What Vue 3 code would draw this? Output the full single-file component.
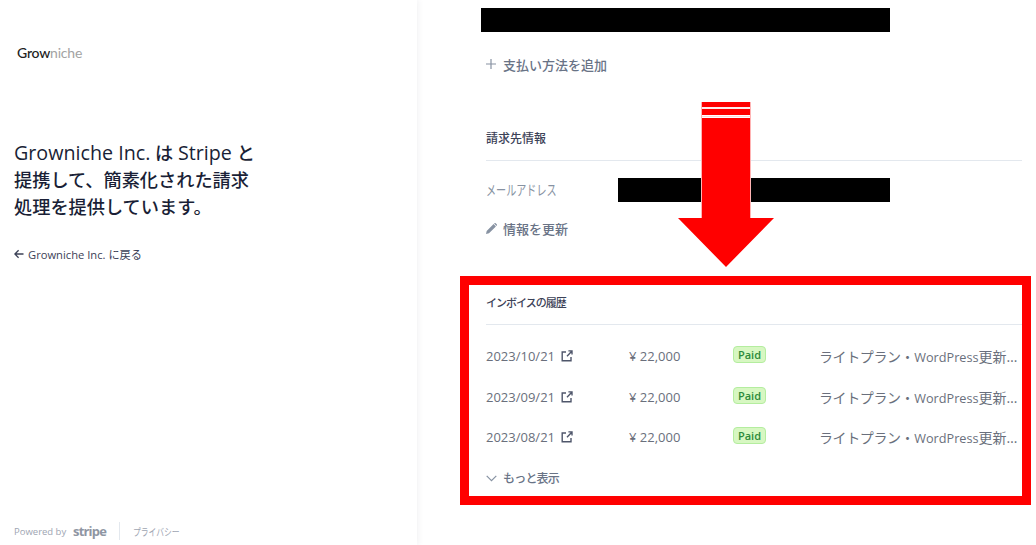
<script setup>
const invoices = [
  { id: 1, date: '2023/10/21', amount: '¥ 22,000', status: 'Paid' },
  { id: 2, date: '2023/09/21', amount: '¥ 22,000', status: 'Paid' },
  { id: 3, date: '2023/08/21', amount: '¥ 22,000', status: 'Paid' },
]
</script>

<template>
  <div class="page">
    <aside class="side">
      <div class="logo"><span class="logo-dark">Grow</span><span class="logo-light">niche</span></div>
      <h1 class="lead"><span class="latin">Growniche Inc.</span> は <span class="latin">Stripe</span> と<br>提携して、簡素化された請求<br>処理を提供しています。</h1>
      <a class="back">
        <svg width="10" height="10" viewBox="0 0 10 10"><path d="M9.500 5H1M4.600 1.200 .9 5l3.700 3.800" fill="none" stroke="#3c4257" stroke-width="1.3"/></svg>
        <span>Growniche Inc. に戻る</span>
      </a>
      <footer class="foot">
        <span class="powered">Powered by</span>
        <span class="stripe">stripe</span>
        <span class="foot-sep"></span>
        <span class="privacy">プライバシー</span>
      </footer>
    </aside>

    <main class="content">
      <a class="action add">
        <svg width="10" height="10" viewBox="0 0 10 10"><path d="M5 0v10M0 5h10" stroke="#8792a2" stroke-width="1.2"/></svg>
        <span>支払い方法を追加</span>
      </a>

      <section class="billing">
        <h2 class="head">請求先情報</h2>
        <div class="mail">メールアドレス</div>
        <a class="action edit">
          <svg width="11" height="11" viewBox="0 0 11 11"><path d="M0 11l.7-3L7.600 1.100l2.300 2.300L3 10.300zM8.400 .3a.9 .9 0 0 1 1.300 0l1 1a.9 .9 0 0 1 0 1.300l-.3 .3-2.300-2.300z" fill="#8792a2"/></svg>
          <span>情報を更新</span>
        </a>
      </section>

      <section class="history">
        <h2 class="head"><span class="head-narrow">インボイスの履歴</span></h2>
        <div class="rows">
          <div v-for="row in invoices" :key="row.id" class="row">
            <div class="date">
              <span>{{ row.date }}</span>
              <svg width="12" height="12" viewBox="0 0 12 12" fill="none" stroke="#4f566b" stroke-width="1.4"><path d="M5 2H1.200v8.800H10V7M6 6.200 11 1M7.400 .9H11v3.600"/></svg>
            </div>
            <div class="amount">{{ row.amount }}</div>
            <div class="status"><span class="badge">{{ row.status }}</span></div>
            <div class="plan"><span class="plan-name">ライトプラン・</span><span class="plan-latin">WordPress</span>更新サポートプラン</div>
          </div>
        </div>
        <a class="action more">
          <svg width="11" height="7" viewBox="0 0 11 7"><path d="M.7 .8l4.800 4.800L10.300 .8" fill="none" stroke="#8792a2" stroke-width="1.2"/></svg>
          <span>もっと表示</span>
        </a>
      </section>
    </main>

    <!-- annotations on top of the screenshot -->
    <div class="mask mask-top"></div>
    <div class="mask mask-mail"></div>
    <div class="frame"></div>
    <svg class="arrow" width="98" height="166" viewBox="0 0 98 166">
      <path d="M24.500 0V116M73.500 0V116" stroke="#ffb4b4" stroke-width="1"/>
      <path d="M25 0H73V5H25zM25 7H73V13H25zM25 16H73V116H97L49 165L1 116H25z" fill="#ff0000"/>
      <path d="M25 6H73M25 14.500H73" stroke="#ffd9d9" stroke-width="1"/>
    </svg>
  </div>
</template>

<style scoped>
.page {
  position: relative;
  display: flex;
  width: 1036px;
  height: 545px;
  overflow: hidden;
  background: #fff;
  font-family: "Open Sans", "Noto Sans CJK JP", sans-serif;
  color: #1a1f36;
}
.side {
  width: 417px;
  height: 545px;
  box-sizing: border-box;
  padding: 0 14px;
  display: flex;
  flex-direction: column;
  flex-shrink: 0;
  box-shadow: 1px 0 6px rgba(60, 66, 87, 0.08);
}
.logo {
  margin: 43px 0 0 3px;
  height: 20px;
  line-height: 20px;
  font-family: "Lato", sans-serif;
  font-size: 14px;
  letter-spacing: -0.2px;
}
.logo-dark { color: #222; font-weight: 500; }
.logo-light { color: #a3a3a3; }
.lead {
  margin: 76px 0 0;
  font-size: 18.200px;
  line-height: 27px;
  font-weight: 500;
  color: #1a1f36;
}
.latin { font-size: 19.700px; }
.back {
  display: flex;
  align-items: center;
  gap: 4px;
  margin-top: 23px;
  height: 20px;
  font-size: 11.200px;
  color: #3c4257;
}
.foot {
  margin-top: auto;
  margin-bottom: 5px;
  height: 18px;
  display: flex;
  align-items: center;
  color: #9ea5b2;
  font-size: 9.500px;
}
.powered { width: 59px; }
.stripe {
  width: 46px;
  font-weight: 700;
  font-size: 13px;
  letter-spacing: -0.8px;
  color: #8f96a3;
}
.foot-sep {
  width: 1px;
  height: 18px;
  background: #e3e8ee;
  margin-right: 13px;
}
.privacy {
  font-size: 10px;
  transform: scaleX(0.78);
  transform-origin: left center;
}
.content {
  width: 536px;
  margin-left: 69px;
}
.action {
  display: flex;
  align-items: center;
  font-size: 13px;
  font-weight: 500;
  color: #697386;
}
.action svg { flex-shrink: 0; }
.add {
  height: 20px;
  margin-top: 54px;
  gap: 7px;
}
.head {
  margin: 0;
  height: 45px;
  line-height: 45px;
  font-size: 12px;
  font-weight: 500;
  color: #3c4257;
  border-bottom: 1px solid #e3e8ee;
  box-sizing: border-box;
}
.head-narrow { font-size: 11px; letter-spacing: -1px; }
.billing { margin-top: 42px; }
.mail {
  margin-top: 17px;
  height: 24px;
  line-height: 24px;
  font-size: 14px;
  color: #8792a2;
  transform: scaleX(0.72);
  transform-origin: left center;
}
.edit {
  height: 20px;
  margin-top: 16px;
  gap: 6px;
}
.history { margin-top: 42px; }
.rows {
  margin-top: 11px;
  display: flex;
  flex-direction: column;
}
.row {
  display: grid;
  grid-template-columns: 143px 104px 86px 1fr;
  align-items: center;
  height: 40.400px;
  font-size: 13px;
  color: #6a6f7c;
}
.date {
  display: flex;
  align-items: center;
  gap: 6px;
}
.badge {
  display: block;
  width: 33px;
  height: 17px;
  line-height: 16px;
  box-sizing: border-box;
  margin-top: -3px;
  text-align: center;
  font-size: 11px;
  font-weight: 600;
  color: #2c8a3a;
  background: #d7f7c2;
  border: 1px solid #b4ed9f;
  border-radius: 4px;
}
.plan {
  width: 200px;
  overflow: hidden;
  white-space: nowrap;
  text-overflow: ellipsis;
  font-size: 14px;
}
.plan-name { letter-spacing: -0.4px; }
.plan-latin { font-size: 12.700px; }
.more {
  height: 20px;
  margin-top: 11px;
  gap: 6px;
  font-size: 12px;
  letter-spacing: -0.8px;
}
.mask {
  position: absolute;
  background: #000;
}
.mask-top { left: 481px; top: 8px; width: 409px; height: 24px; }
.mask-mail { left: 618px; top: 178px; width: 272px; height: 24px; }
.frame {
  position: absolute;
  left: 460px;
  top: 276px;
  width: 571px;
  height: 229px;
  box-sizing: border-box;
  border: 9px solid #ff0000;
}
.arrow {
  position: absolute;
  left: 677px;
  top: 102px;
}
</style>
